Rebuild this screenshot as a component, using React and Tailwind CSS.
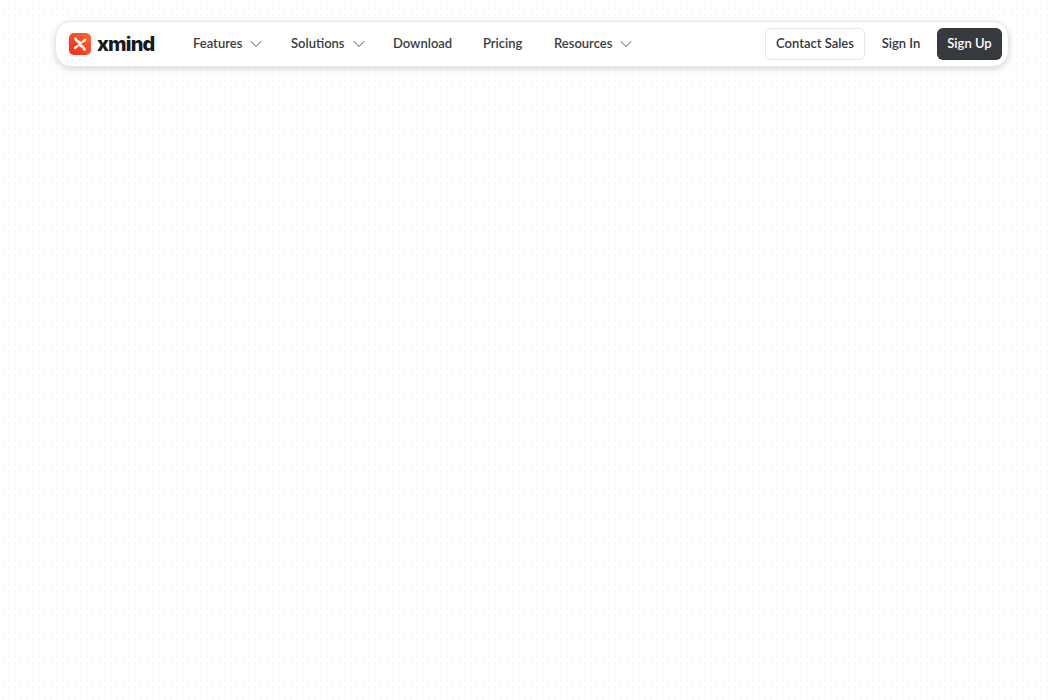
import { ChevronDown } from "lucide-react"

const navItems = [
  { label: "Features", menu: true, width: "w-[98px]" },
  { label: "Solutions", menu: true, width: "w-[102px]" },
  { label: "Download", menu: false, width: "w-[90px]" },
  { label: "Pricing", menu: false, width: "w-[71px]" },
  { label: "Resources", menu: true, width: "w-[100px]" },
]

const XmindLogo = () => (
  <svg width="22" height="22" viewBox="0 0 22 22" className="shrink-0">
    <defs>
      <linearGradient id="xm" x1="0" y1="1" x2="1" y2="0">
        <stop offset="0" stopColor="#f9261a" />
        <stop offset="1" stopColor="#fb6a35" />
      </linearGradient>
    </defs>
    <rect width="22" height="22" rx="5" fill="url(#xm)" />
    <path d="M6.500 5.500c.5 2.500 3 3.500 5.500 4.500M15.500 16.500c-.5-2.500-3-3.500-5.500-4.500" fill="none" stroke="#fff" strokeWidth="2.700" strokeLinecap="round" />
    <path d="M16 7c-.6.800-1.100 1.100-1.800 1.400M6 15c.6-.800 1.100-1.100 1.800-1.400" fill="none" stroke="#fff" strokeWidth="2.500" strokeLinecap="round" />
  </svg>
)

const App = () => {
  return (
    <div className="h-[700px] w-full overflow-hidden bg-white bg-[radial-gradient(#f9f9f9_1px,transparent_1px)] bg-[length:6px_6px] pt-[21px] font-['Lato',sans-serif]">
      <nav className="mx-[55px] flex h-[46px] w-[954px] items-center rounded-2xl border border-[#e8e8e8] bg-white pl-[13px] pr-[6px] shadow-[0_2px_6px_rgba(0,0,0,0.16)]">
        <a className="flex w-[111px] items-center gap-[6px]">
          <XmindLogo />
          <span className="font-['Inter',sans-serif] text-[20px] leading-none font-extrabold tracking-[-0.8px] text-[#17191c]">xmind</span>
        </a>
        <ul className="ml-[13px] flex items-center">
          {navItems.map((item) => (
            <li key={item.label} className={`flex items-center gap-1 text-[13px] font-semibold text-[#3a3d42] ${item.width}`}>
              <span>{item.label}</span>
              {item.menu && <ChevronDown className="h-5 w-5 text-[#74777c]" strokeWidth={1.250} />}
            </li>
          ))}
        </ul>
        <div className="ml-auto flex items-center">
          <button className="h-8 w-[100px] rounded-md border border-[#e5e5e5] bg-white text-[13px] font-semibold text-[#33363a]">Contact Sales</button>
          <button className="h-8 w-[72px] text-[13px] font-semibold text-[#33363a]">Sign In</button>
          <button className="h-8 w-[65px] rounded-md bg-[#363a3e] text-[13px] font-semibold text-white">Sign Up</button>
        </div>
      </nav>
    </div>
  )
}

export default App
